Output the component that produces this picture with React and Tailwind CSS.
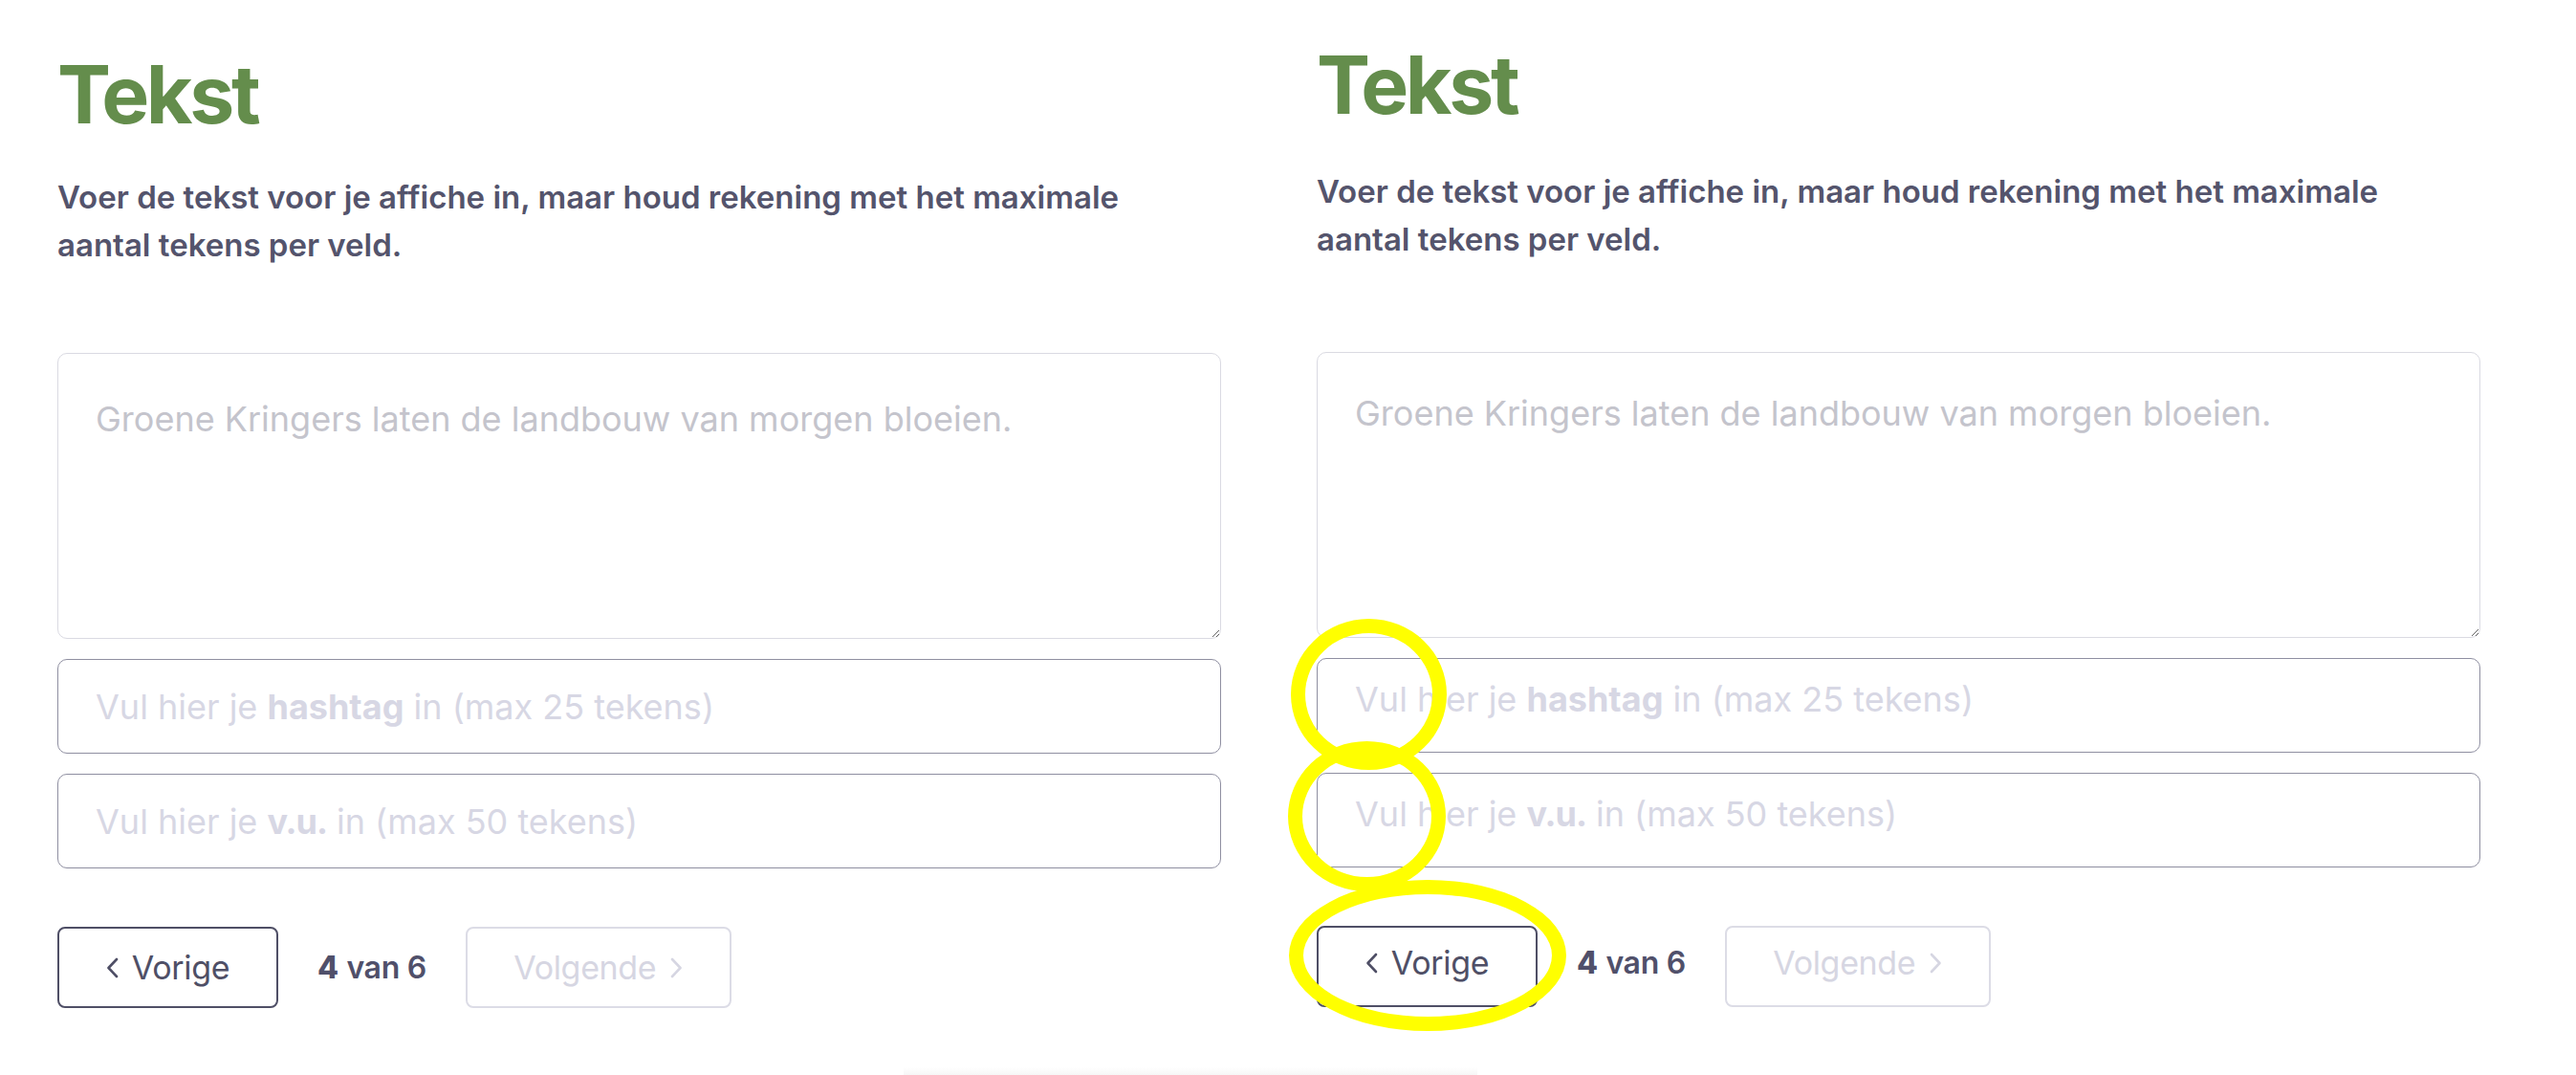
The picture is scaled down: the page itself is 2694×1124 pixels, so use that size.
import React from "react";

// two renderings of the same "Tekst" step, side by side; the right one has annotation rings
function ChevronLeft({ className }) {
  return (
    <svg viewBox="0 0 13 22" className={className} fill="none" stroke="currentColor" strokeWidth="2.6" strokeLinecap="round" strokeLinejoin="round">
      <polyline points="11,2 2.5,11 11,20" />
    </svg>
  );
}

function ChevronRight({ className }) {
  return (
    <svg viewBox="0 0 13 22" className={className} fill="none" stroke="currentColor" strokeWidth="2.6" strokeLinecap="round" strokeLinejoin="round">
      <polyline points="2,2 10.5,11 2,20" />
    </svg>
  );
}

function Panel({ shifted }) {
  return (
    <div className={`relative w-[1217px] ${shifted ? "pt-[47px]" : "pt-[57px]"}`}>
      <h1 className="text-[84px] leading-none font-bold tracking-[-0.04em] text-[#648d4c]">Tekst</h1>
      <p className={`${shifted ? "mt-[44px]" : "mt-[40px]"} max-w-[1160px] text-[33px] leading-[50px] font-semibold text-[#54546c]`}>
        Voer de tekst voor je affiche in, maar houd rekening met het maximale aantal tekens per veld.
      </p>

      <textarea
        placeholder="Groene Kringers laten de landbouw van morgen bloeien."
        className={`${shifted ? "mt-[93px] pt-[41px]" : "mt-[88px] pt-[46px]"} block h-[299px] w-full rounded-[10px] border border-[#dadae2] bg-white pl-[39px] pr-6 text-[36px] leading-[44px] text-[#54546c] outline-none placeholder:text-[#c4c4cc]`}
      />

      <div className="mt-[21px] flex flex-col gap-[21px]">
        <div className={`flex h-[99px] items-center rounded-[10px] border border-[#8f8fa1] pl-[39px] ${shifted ? "pb-[13px]" : ""}`}>
          <span className="text-[36px] leading-none text-[#d7d7e4]">
            Vul hier je <b className="font-bold">hashtag</b> in (max 25 tekens)
          </span>
        </div>
        <div className={`flex h-[99px] items-center rounded-[10px] border border-[#8f8fa1] pl-[39px] ${shifted ? "pb-[13px]" : ""}`}>
          <span className="text-[36px] leading-none text-[#d7d7e4]">
            Vul hier je <b className="font-bold tracking-[-0.03em]">v.u.</b> in (max 50 tekens)
          </span>
        </div>
      </div>

      <div className="mt-[61px] flex items-center gap-[41px]">
        <button className={`flex h-[85px] w-[231px] items-center justify-center gap-[14px] rounded-[8px] border-2 border-[#4f4f66] text-[#4f4f66] ${shifted ? "pb-[8px]" : ""}`}>
          <ChevronLeft className="h-[22px] w-[13px]" />
          <span className="text-[34px] leading-none tracking-[-0.01em]">Vorige</span>
        </button>
        <div className={`text-[32px] leading-none tracking-[-0.01em] text-[#50506a] ${shifted ? "pb-[8px]" : ""}`}>
          <span className="font-extrabold">4</span> <span className="font-semibold">van 6</span>
        </div>
        <button className={`flex h-[85px] w-[278px] items-center justify-center gap-[15px] rounded-[8px] border-2 border-[#dcdce6] text-[#d6d6e2] ${shifted ? "pb-[8px]" : ""}`}>
          <span className="text-[34px] leading-none tracking-[-0.01em]">Volgende</span>
          <ChevronRight className="h-[22px] w-[13px]" />
        </button>
      </div>

      {shifted && (
        <>
          <div className="absolute left-[-27px] top-[647px] h-[158px] w-[163px] rounded-[50%] border-[15px] border-[#ffff00]" />
          <div className="absolute left-[-30px] top-[775px] h-[157px] w-[165px] rounded-[50%] border-[15px] border-[#ffff00]" />
          <div className="absolute left-[-29px] top-[920px] h-[158px] w-[290px] rounded-[50%] border-[15px] border-[#ffff00]" />
        </>
      )}
    </div>
  );
}

export default function App() {
  return (
    <div className="flex h-[1124px] flex-col overflow-hidden bg-white font-['Inter',sans-serif]">
      <div className="flex gap-[100px] pl-[60px]">
        <Panel />
        <Panel shifted />
      </div>
      {/* faint edge of whatever sits below the fold */}
      <div className="mt-auto ml-[945px] h-[8px] w-[600px] bg-gradient-to-b from-white to-[#f6f6f6]" />
    </div>
  );
}
